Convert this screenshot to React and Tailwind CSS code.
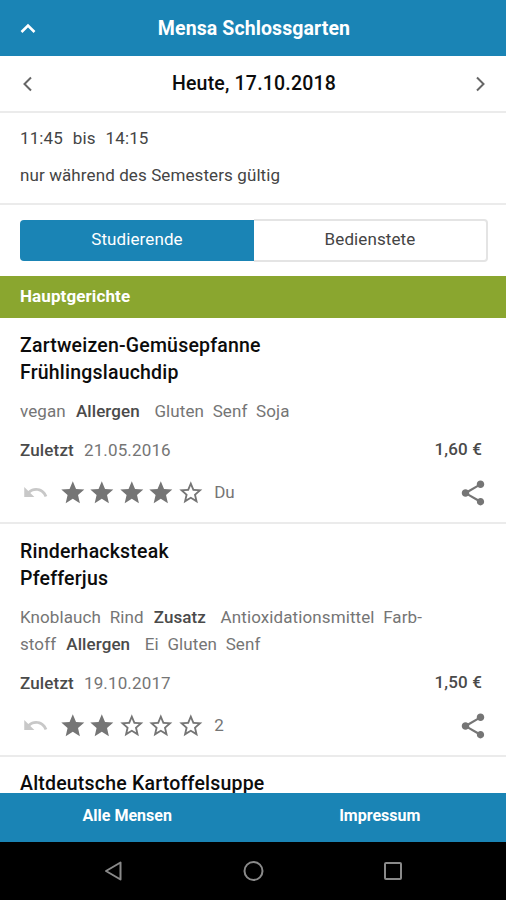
import React from 'react';

const tag = (text) => ({ text });
const label = (text) => ({ text, bold: true });

const meals = [
    {
        title: ['Zartweizen-Gemüsepfanne', 'Frühlingslauchdip'],
        lines: [[tag('vegan'), label('Allergen'), tag('Gluten'), tag('Senf'), tag('Soja')]],
        last: '21.05.2016',
        price: '1,60 €',
        stars: 4,
        votes: 'Du',
    },
    {
        title: ['Rinderhacksteak', 'Pfefferjus'],
        lines: [
            [tag('Knoblauch'), tag('Rind'), label('Zusatz'), tag('Antioxidationsmittel'), tag('Farb-')],
            [tag('stoff'), label('Allergen'), tag('Ei'), tag('Gluten'), tag('Senf')],
        ],
        last: '19.10.2017',
        price: '1,50 €',
        stars: 2,
        votes: '2',
    },
];

const STAR = 'M12 17.27 18.18 21l-1.64-7.03L22 9.24l-7.19-.61L12 2 9.19 8.63 2 9.24l5.46 4.73L5.82 21z';
const STAR_OUTLINE = 'M22 9.24l-7.19-.62L12 2 9.19 8.63 2 9.24l5.46 4.73L5.82 21 12 17.27 18.18 21l-1.63-7.03L22 9.24zM12 15.4l-3.76 2.27 1-4.28-3.32-2.88 4.38-.38L12 6.1l1.71 4.04 4.38.38-3.32 2.88 1 4.28L12 15.4z';
const UNDO = 'M12.5 8c-2.65 0-5.05.99-6.9 2.6L2 7v9h9l-3.62-3.62c1.39-1.16 3.16-1.88 5.12-1.88 3.54 0 6.55 2.31 7.6 5.5l2.37-.78C21.08 11.03 17.15 8 12.5 8z';
const SHARE = 'M18 16.08c-.76 0-1.44.3-1.96.77L8.91 12.7c.05-.23.09-.46.09-.7s-.04-.47-.09-.7l7.05-4.11c.54.5 1.25.81 2.04.81 1.66 0 3-1.34 3-3s-1.34-3-3-3-3 1.34-3 3c0 .24.04.47.09.7L8.04 9.81C7.5 9.31 6.79 9 6 9c-1.66 0-3 1.34-3 3s1.34 3 3 3c.79 0 1.5-.31 2.04-.81l7.12 4.16c-.05.21-.08.43-.08.65 0 1.61 1.31 2.92 2.92 2.92s2.92-1.31 2.92-2.92-1.31-2.92-2.92-2.92z';

const Icon = ({ d, className }) => (
    <svg viewBox="0 0 24 24" fill="currentColor" className={`shrink-0 ${className}`}>
        <path d={d} />
    </svg>
);

const Chevron = ({ points, className }) => (
    <svg viewBox="0 0 16 16" fill="none" stroke="currentColor" className={`size-4 shrink-0 ${className}`}>
        <polyline points={points} />
    </svg>
);

const MealTitle = ({ lines }) => (
    <h2 className="text-[19.5px] leading-[27px] font-medium tracking-[0.2px] text-[#0c0c0c]">
        {lines.map((line) => (
            <span key={line} className="block">{line}</span>
        ))}
    </h2>
);

const Meal = ({ title, lines, last, price, stars, votes }) => (
    <article className="border-b-2 border-[#ebebeb] pt-3.5 pr-5 pb-4 pl-5">
        <MealTitle lines={title} />

        <div className="mt-3 text-[17px] leading-[27px] tracking-[0.1px] text-[#757575]">
            {lines.map((line, i) => (
                <div key={i} className="flex gap-[8.6px]">
                    {line.map(({ text, bold }) => (
                        <span key={text} className={bold ? 'ml-[1.5px] mr-1.5 font-medium text-[#4a4a4a]' : ''}>{text}</span>
                    ))}
                </div>
            ))}
        </div>

        <div className="mt-3 flex text-[17px] leading-[27px] tracking-[0.15px] text-[#757575]">
            <span className="font-medium text-[#4a4a4a]">Zuletzt</span>
            <span className="ml-2.5">{last}</span>
            <span className="ml-auto mr-1 -mt-px font-medium text-[#4a4a4a]">{price}</span>
        </div>

        <div className="mt-[15px] flex h-[27px] items-center text-[#757575]">
            <Icon d={UNDO} className="ml-0.5 size-[27px] text-[#c8c8c8]" />
            <div className="ml-2.5 flex gap-[1.8px]">
                {[1, 2, 3, 4, 5].map((n) => (
                    <Icon key={n} d={n <= stars ? STAR : STAR_OUTLINE} className="size-[27.6px]" />
                ))}
            </div>
            <span className="ml-2.5 text-[17px]">{votes}</span>
            <Icon d={SHARE} className="ml-auto -mr-0.5 size-[30px]" />
        </div>
    </article>
);

const App = () => (
    <div className="flex h-[900px] w-[506px] flex-col overflow-hidden bg-white font-['Roboto',sans-serif]">
        <header className="flex h-14 shrink-0 items-center justify-between bg-[#1a84b5] px-5 text-white">
            <Chevron points="1.5 12 8 5.5 14.5 12" className="stroke-[2.6]" />
            <h1 className="pt-0.5 pl-0.5 text-[19.5px] font-bold tracking-[0.1px]">Mensa Schlossgarten</h1>
            <span className="w-4" />
        </header>

        <div className="flex h-[57px] shrink-0 items-center justify-between border-b-2 border-[#ebebeb] px-[18px] text-[#666]">
            <Chevron points="13 1.5 6.5 8 13 14.5" className="stroke-2" />
            <span className="pl-0.5 text-[19.5px] font-medium tracking-[0.2px] text-[#0c0c0c]">Heute, 17.10.2018</span>
            <Chevron points="5 1.5 11.5 8 5 14.5" className="stroke-2" />
        </div>

        <div className="flex h-[92px] shrink-0 flex-col gap-2.5 border-b-2 border-[#ebebeb] px-5 pt-3 text-[17px] leading-[27px] tracking-[0.1px] text-[#444]">
            <div className="flex gap-2.5">
                <span>11:45</span>
                <span>bis</span>
                <span>14:15</span>
            </div>
            <div>nur während des Semesters gültig</div>
        </div>

        <div className="h-[71px] shrink-0 pt-3.5 pr-[18px] pl-5">
            <div className="flex h-[43px] text-center text-[17px] leading-[41px] tracking-[0.1px]">
                <div className="my-px w-[234px] rounded-l bg-[#1a84b5] leading-[39px] text-white">Studierende</div>
                <div className="flex-1 rounded-r border-2 border-l-0 border-[#e4e4e4] leading-[37px] text-[#444]">Bedienstete</div>
            </div>
        </div>

        <div className="h-[42px] shrink-0 bg-[#8aa62f] px-5 text-[17px] leading-10 font-bold tracking-[0.1px] text-white">Hauptgerichte</div>

        <main className="min-h-0 flex-1 overflow-hidden">
            {meals.map((meal) => (
                <Meal key={meal.price} {...meal} />
            ))}
            <div className="px-5 pt-[13px]">
                <MealTitle lines={['Altdeutsche Kartoffelsuppe']} />
            </div>
        </main>

        <footer className="flex h-[49px] shrink-0 bg-[#1a84b5] pl-px text-center text-[16px] leading-[46px] font-bold text-white">
            <span className="flex-1">Alle Mensen</span>
            <span className="flex-1">Impressum</span>
        </footer>

        <nav className="flex h-[58px] shrink-0 items-center bg-black px-[103px] text-[#8a8a8a]">
            <svg viewBox="0 0 300 22" fill="none" stroke="currentColor" className="h-[22px] w-[300px] stroke-2">
                <path d="M17.5 2.5v17L3 11z" strokeLinejoin="round" />
                <circle cx="150.5" cy="11" r="9" />
                <rect x="282" y="3" width="16" height="16" rx="1" />
            </svg>
        </nav>
    </div>
);

export default App;
